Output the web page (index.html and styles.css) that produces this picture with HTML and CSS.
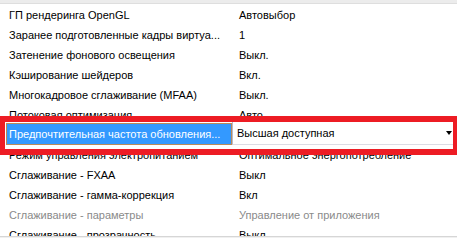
FILE: index.html
```html
<!DOCTYPE html>
<html lang="ru">
<head>
<meta charset="utf-8">
<title>Параметры</title>
<link rel="stylesheet" href="styles.css">
</head>
<body>
<div class="panel">
  <div class="header"></div>
  <div class="list">
    <div class="row"><div class="name">ГП рендеринга OpenGL</div><div class="value">Автовыбор</div></div>
    <div class="row"><div class="name">Заранее подготовленные кадры виртуа...</div><div class="value">1</div></div>
    <div class="row"><div class="name">Затенение фонового освещения</div><div class="value">Выкл.</div></div>
    <div class="row"><div class="name">Кэширование шейдеров</div><div class="value">Вкл.</div></div>
    <div class="row"><div class="name">Многокадровое сглаживание (MFAA)</div><div class="value">Выкл.</div></div>
    <div class="row"><div class="name">Потоковая оптимизация</div><div class="value">Авто</div></div>
    <div class="row selected">
      <div class="name sel-name">Предпочтительная частота обновления...</div>
      <div class="combo"><span class="combo-text">Высшая доступная</span><span class="arrow"></span></div>
    </div>
    <div class="row"><div class="name">Режим управления электропитанием</div><div class="value">Оптимальное энергопотребление</div></div>
    <div class="row"><div class="name">Сглаживание - FXAA</div><div class="value">Выкл</div></div>
    <div class="row"><div class="name">Сглаживание - гамма-коррекция</div><div class="value">Вкл</div></div>
    <div class="row disabled"><div class="name">Сглаживание - параметры</div><div class="value">Управление от приложения</div></div>
    <div class="row"><div class="name">Сглаживание - прозрачность</div><div class="value">Выкл</div></div>
  </div>
  <div class="scrollbar"></div>
  <div class="highlight"></div>
</div>
</body>
</html>
```
FILE: styles.css
```css
html, body {
  margin: 0;
  padding: 0;
  background: #ffffff;
}
body {
  width: 457px;
  height: 238px;
  overflow: hidden;
  font-family: "Liberation Sans", Arial, sans-serif;
  font-size: 11px;
  color: #000000;
}
.panel {
  position: relative;
  width: 457px;
  height: 238px;
  overflow: hidden;
}
.header {
  height: 3px;
  background: #ececec;
  border-bottom: 1px solid #dedede;
}
.list {
  display: flex;
  flex-direction: column;
  padding-top: 1px;
}
.row {
  display: grid;
  grid-template-columns: 232px 1fr;
  height: 20px;
  align-items: center;
  white-space: nowrap;
}
.name {
  padding-left: 9px;
  overflow: hidden;
}
.value {
  padding-left: 7px;
}
.disabled {
  color: #8a8a8a;
}
.selected {
  align-items: stretch;
}
.sel-name {
  margin-left: 6px;
  padding-left: 2px;
  background: #3399ff;
  color: #ffffff;
  border: 1px solid #b98b5a;
  display: flex;
  align-items: center;
  margin-top: -2px;
}
.combo {
  display: flex;
  align-items: center;
  justify-content: space-between;
  border-top: 1px solid #a9a9b4;
  border-bottom: 1px solid #dcdce4;
  border-left: 1px solid #b8b8c8;
  margin-top: -4px;
  padding-left: 4px;
  padding-right: 5px;
  background: #ffffff;
}
.arrow {
  width: 0;
  height: 0;
  border-left: 3px solid transparent;
  border-right: 3px solid transparent;
  border-top: 4px solid #000000;
}
.scrollbar {
  position: absolute;
  left: 0;
  right: 0;
  top: 236px;
  height: 2px;
  background: #f0f0f0;
  border-top: 1px solid #d6d6d6;
}
.highlight {
  position: absolute;
  left: 0;
  top: 116px;
  width: 448px;
  height: 27px;
  border: 5px solid #ed1c24;
  border-top-width: 6px;
  border-bottom-width: 6px;
  border-left-width: 5px;
}
```
